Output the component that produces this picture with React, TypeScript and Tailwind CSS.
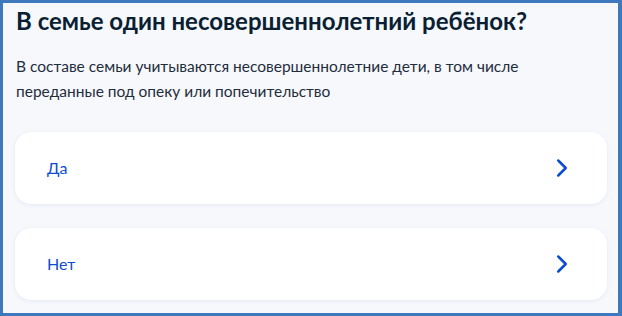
import { ChevronRight } from 'lucide-react';

const options = ['Да', 'Нет'];

export default function App() {
  return (
    <div className="w-[622px] h-[316px] border-[3px] border-r-4 border-[#3f79bd] bg-[#f6f8fc] font-['Lato','Liberation_Sans',sans-serif] overflow-hidden">
      <div className="pl-[12px] pr-[11px] pt-[3px]">
        <h1 className="pl-px text-[24px] leading-[30px] font-bold text-[#0b1f33]">
          В семье один несовершеннолетний ребёнок?
        </h1>
        <p className="pl-px mt-[18px] text-[15.5px] leading-[25px] text-[#1f2d3d]">
          В составе семьи учитываются несовершеннолетние дети, в том числе переданные под опеку или попечительство
        </p>
        <div className="mt-[28px] flex flex-col gap-6">
          {options.map((o) => (
            <div
              key={o}
              className="h-[72px] rounded-2xl bg-white shadow-[0_1px_4px_rgba(0,60,140,0.08)] flex items-center justify-between pl-[32px] pr-[30px]"
            >
              <span className="text-[16px] text-[#0d4cd3]">{o}</span>
              <ChevronRight className="w-[30px] h-[30px] text-[#0d4cd3]" strokeWidth={2} />
            </div>
          ))}
        </div>
      </div>
    </div>
  );
}
